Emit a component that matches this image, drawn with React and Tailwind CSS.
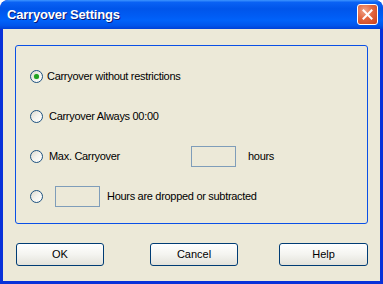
import React from "react";

function Radio({ checked }) {
  return (
    <div className="relative w-[13px] h-[13px] rounded-full border border-[#1C5180] bg-gradient-to-br from-[#DCD9CF] via-[#F4F3EE] to-white shrink-0 flex items-center justify-center">
      {checked && <div className="w-[5px] h-[5px] rounded-full bg-[#21A121] shadow-[0_0_1px_#5ed45e]" />}
    </div>
  );
}

function Btn({ children, w }) {
  return (
    <div className={`${w} h-[23px] rounded-[3px] border border-[#003C74] bg-gradient-to-b from-white via-[#F4F4F0] to-[#E3E2DA] flex items-center justify-center text-[11px] text-black`}>
      {children}
    </div>
  );
}

export default function App() {
  return (
    <div className="w-[383px] h-[284px] bg-[#0831D9] rounded-t-[8px] overflow-hidden flex flex-col" style={{ fontFamily: '"Liberation Sans", Arial, sans-serif' }}>
      <div className="h-[29px] shrink-0 flex items-center justify-between pl-[7px] pr-[5px] bg-[linear-gradient(to_bottom,#3D95FF_0%,#0A62F4_8%,#0055EA_30%,#005CF4_55%,#0062FA_70%,#0055EC_88%,#0040D6_100%)] rounded-t-[8px]">
        <span className="text-white font-bold text-[13px] tracking-[-0.2px] [text-shadow:1px_1px_0_#0A1874]">Carryover Settings</span>
        <div className="w-[21px] h-[21px] rounded-[3px] border border-white bg-[radial-gradient(circle_at_35%_30%,#F0A58A_0%,#E2663F_45%,#C8401A_100%)] flex items-center justify-center">
          <svg width="11" height="11" viewBox="0 0 11 11">
            <path d="M1.5 1.5 L9.5 9.5 M9.5 1.5 L1.5 9.5" stroke="white" strokeWidth="2" strokeLinecap="square" />
          </svg>
        </div>
      </div>
      <div className="flex-1 mx-[3px] mb-[3px] bg-[#ECE9D8] flex flex-col px-[12px] pt-[16px]">
        <div className="h-[179px] border border-[#0A50E6] rounded-[3px] flex flex-col pt-[10px] text-[11px] tracking-[-0.3px] text-black">
          <div className="h-[40px] flex items-center pl-[14px]">
            <Radio checked />
            <span className="ml-[4px]">Carryover without restrictions</span>
          </div>
          <div className="h-[40px] flex items-center pl-[14px]">
            <Radio />
            <span className="ml-[6px]">Carryover Always 00:00</span>
          </div>
          <div className="h-[40px] flex items-center pl-[14px]">
            <Radio />
            <span className="ml-[6px] w-[142px]">Max. Carryover</span>
            <div className="w-[45px] h-[21px] border border-[#7F9DB9]" />
            <span className="ml-[12px]">hours</span>
          </div>
          <div className="h-[40px] flex items-center pl-[14px]">
            <Radio />
            <div className="ml-[12px] w-[45px] h-[21px] border border-[#7F9DB9]" />
            <span className="ml-[7px]">Hours are dropped or subtracted</span>
          </div>
        </div>
        <div className="mt-[19px] flex pl-[1px]">
          <Btn w="w-[88px]">OK</Btn>
          <div className="w-[46px]" />
          <Btn w="w-[88px]">Cancel</Btn>
          <div className="w-[41px]" />
          <Btn w="w-[89px]">Help</Btn>
        </div>
      </div>
    </div>
  );
}
